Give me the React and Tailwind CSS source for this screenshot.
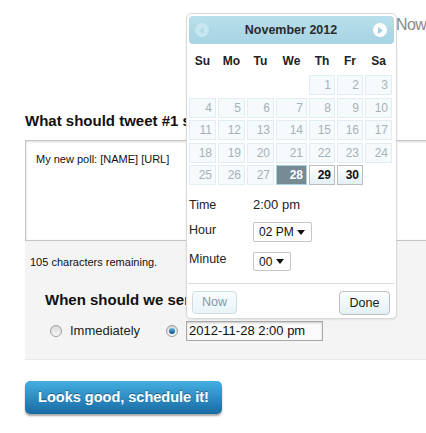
import React from "react";

const COLS = "grid grid-cols-[27px_27px_27px_31px_26px_26px_27px] gap-x-[2px]";

function Cell({ d }) {
  if (d === null) return <div className="h-[20px]" />;
  if (d === 28)
    return (
      <div className="h-[20px] flex items-center justify-end pr-[3px] bg-[#778b94] border border-[#a6d1e0] text-white font-bold text-[12px]">
        {d}
      </div>
    );
  if (d > 28)
    return (
      <div className="h-[20px] flex items-center justify-end pr-[3px] bg-linear-to-b from-[#ffffff] to-[#e3f0f6] border border-[#bcbcbc] text-[#111] font-bold text-[12px]">
        {d}
      </div>
    );
  return (
    <div className="h-[20px] flex items-center justify-end pr-[3px] bg-[#f5fafc] border border-[#e2edf2] text-[#a7b1b8] text-[12px]">
      {d}
    </div>
  );
}

function Select({ value, w }) {
  return (
    <div
      className={`flex items-center justify-between h-full border border-[#c6c6c6] rounded-[2px] bg-white pl-[5px] pr-[6px] text-[12px] text-[#111] ${w}`}
    >
      <span>{value}</span>
      <svg width="8" height="5" viewBox="0 0 8 5">
        <path d="M0 0 L8 0 L4 5 Z" fill="#111" />
      </svg>
    </div>
  );
}

function Radio({ checked }) {
  return (
    <div className="w-[12px] h-[12px] rounded-full border border-[#9a9a9a] bg-linear-to-b from-[#d8d8d8] to-[#fafafa] flex items-center justify-center">
      {checked && (
        <div className="w-[6px] h-[6px] rounded-full bg-linear-to-b from-[#5fb8e8] to-[#0a4f80]" />
      )}
    </div>
  );
}

export default function App() {
  const rows = [
    [null, null, null, null, 1, 2, 3],
    [4, 5, 6, 7, 8, 9, 10],
    [11, 12, 13, 14, 15, 16, 17],
    [18, 19, 20, 21, 22, 23, 24],
    [25, 26, 27, 28, 29, 30, null],
  ];
  const days = ["Su", "Mo", "Tu", "We", "Th", "Fr", "Sa"];

  return (
    <div className="relative w-[426px] h-[433px] overflow-hidden bg-white font-['Liberation_Sans',Arial,sans-serif] text-[#222]">
      <div className="w-[520px] pl-[25px]">
        <div className="pt-[15px] pl-[371px] text-[16px] leading-[20px] tracking-[-0.6px] text-[#8a8a8a] whitespace-nowrap">
          Now
        </div>

        <div className="mt-[77px] text-[15px] leading-[18px] font-bold text-[#111] whitespace-nowrap">
          What should tweet #1 say?
        </div>

        <div className="mt-[10px] h-[101px] border border-[#c4c4c4] bg-white shadow-[inset_0_1px_3px_rgba(0,0,0,0.15)] pl-[10px] pt-[11px] text-[11px] leading-[14px] text-[#111]">
          My new poll: [NAME] [URL]
        </div>

        <div className="h-[119px] bg-[#f4f4f4] border-b border-[#e9e9e9]">
          <div className="pt-[14px] pl-[5px] text-[11px] leading-[14px] text-[#111]">
            105 characters remaining.
          </div>
          <div className="mt-[22px] pl-[20px] text-[15px] leading-[18px] font-bold text-[#111] whitespace-nowrap">
            When should we send it?
          </div>
          <div className="mt-[12px] pl-[25px] flex items-center h-[20px]">
            <Radio />
            <span className="ml-[8px] text-[13px] text-[#222]">Immediately</span>
            <div className="ml-[26px]">
              <Radio checked />
            </div>
            <div className="ml-[8px] w-[137px] h-[20px] border border-[#a9a9a9] shadow-[inset_0_1px_2px_rgba(0,0,0,0.2)] bg-[#fafafa] flex items-center pl-[2px] text-[13px] text-[#111]">
              2012-11-28 2:00 pm
            </div>
          </div>
        </div>

        <div className="mt-[21px] w-[197px] h-[33px] rounded-[5px] bg-linear-to-b from-[#45afe2] to-[#176ba3] shadow-[0_2px_2px_rgba(0,0,0,0.35)] flex items-center justify-center text-white font-bold text-[14.5px] [text-shadow:0_-1px_0_rgba(0,0,0,0.35)]">
          Looks good, schedule it!
        </div>
      </div>

      {/* Datepicker popup */}
      <div className="absolute left-[186px] top-[13px] w-[211px] h-[306px] rounded-[5px] border border-[#d9d9d9] bg-white p-[2px] shadow-[0_1px_2px_rgba(0,0,0,0.08)]">
        <div className="h-[28px] rounded-[4px] bg-linear-to-b from-[#b8dfeb] to-[#a7d3e3] flex items-center justify-between pl-[6px] pr-[7px]">
          <div className="w-[14px] h-[14px] rounded-full bg-[#c8e6f0] flex items-center justify-center">
            <svg width="6" height="7" viewBox="0 0 6 7">
              <path d="M5 0 L5 7 L0 3.5 Z" fill="#b3dbe8" />
            </svg>
          </div>
          <div className="text-[12.5px] font-bold text-[#2b2b2b]">November 2012</div>
          <div className="w-[14px] h-[14px] rounded-full bg-white flex items-center justify-center">
            <svg width="6" height="7" viewBox="0 0 6 7">
              <path d="M1 0 L1 7 L6 3.5 Z" fill="#9fcfe0" />
            </svg>
          </div>
        </div>

        <div className={`${COLS} h-[31px] pt-[3px] items-center`}>
          {days.map((d) => (
            <div key={d} className="text-center text-[12px] font-bold text-[#222]">
              {d}
            </div>
          ))}
        </div>

        <div className={`${COLS} gap-y-[2.5px]`}>
          {rows.flat().map((d, i) => (
            <Cell key={i} d={d} />
          ))}
        </div>

        <div className="mt-[10px] flex items-center h-[20px] text-[12.5px] text-[#222]">
          <span className="w-[64px]">Time</span>
          <span className="text-[13px]">2:00 pm</span>
        </div>
        <div className="mt-[7px] flex items-center h-[20px] text-[12.5px] text-[#222]">
          <span className="w-[64px] -mt-[3px]">Hour</span>
          <Select value="02 PM" w="w-[59px]" />
        </div>
        <div className="mt-[10px] flex items-center h-[19px] text-[12.5px] text-[#222]">
          <span className="w-[64px] -mt-[4px]">Minute</span>
          <Select value="00" w="w-[38px]" />
        </div>

        <div className="mt-[12px] -mx-[1px] border-t border-[#dcdcdc] pt-[7px] flex justify-between pl-[4px] pr-[5px]">
          <div className="w-[45px] h-[23px] rounded-[4px] border border-[#cfdde3] bg-linear-to-b from-[#f8fcfd] to-[#e9f4f8] flex items-center justify-center text-[12.5px] text-[#8397a2]">
            Now
          </div>
          <div className="w-[51px] h-[24px] rounded-[4px] border border-[#bdbdbd] bg-linear-to-b from-[#fdfeff] to-[#e2f0f6] flex items-center justify-center text-[12.5px] text-[#1a1a1a]">
            Done
          </div>
        </div>
      </div>
    </div>
  );
}
